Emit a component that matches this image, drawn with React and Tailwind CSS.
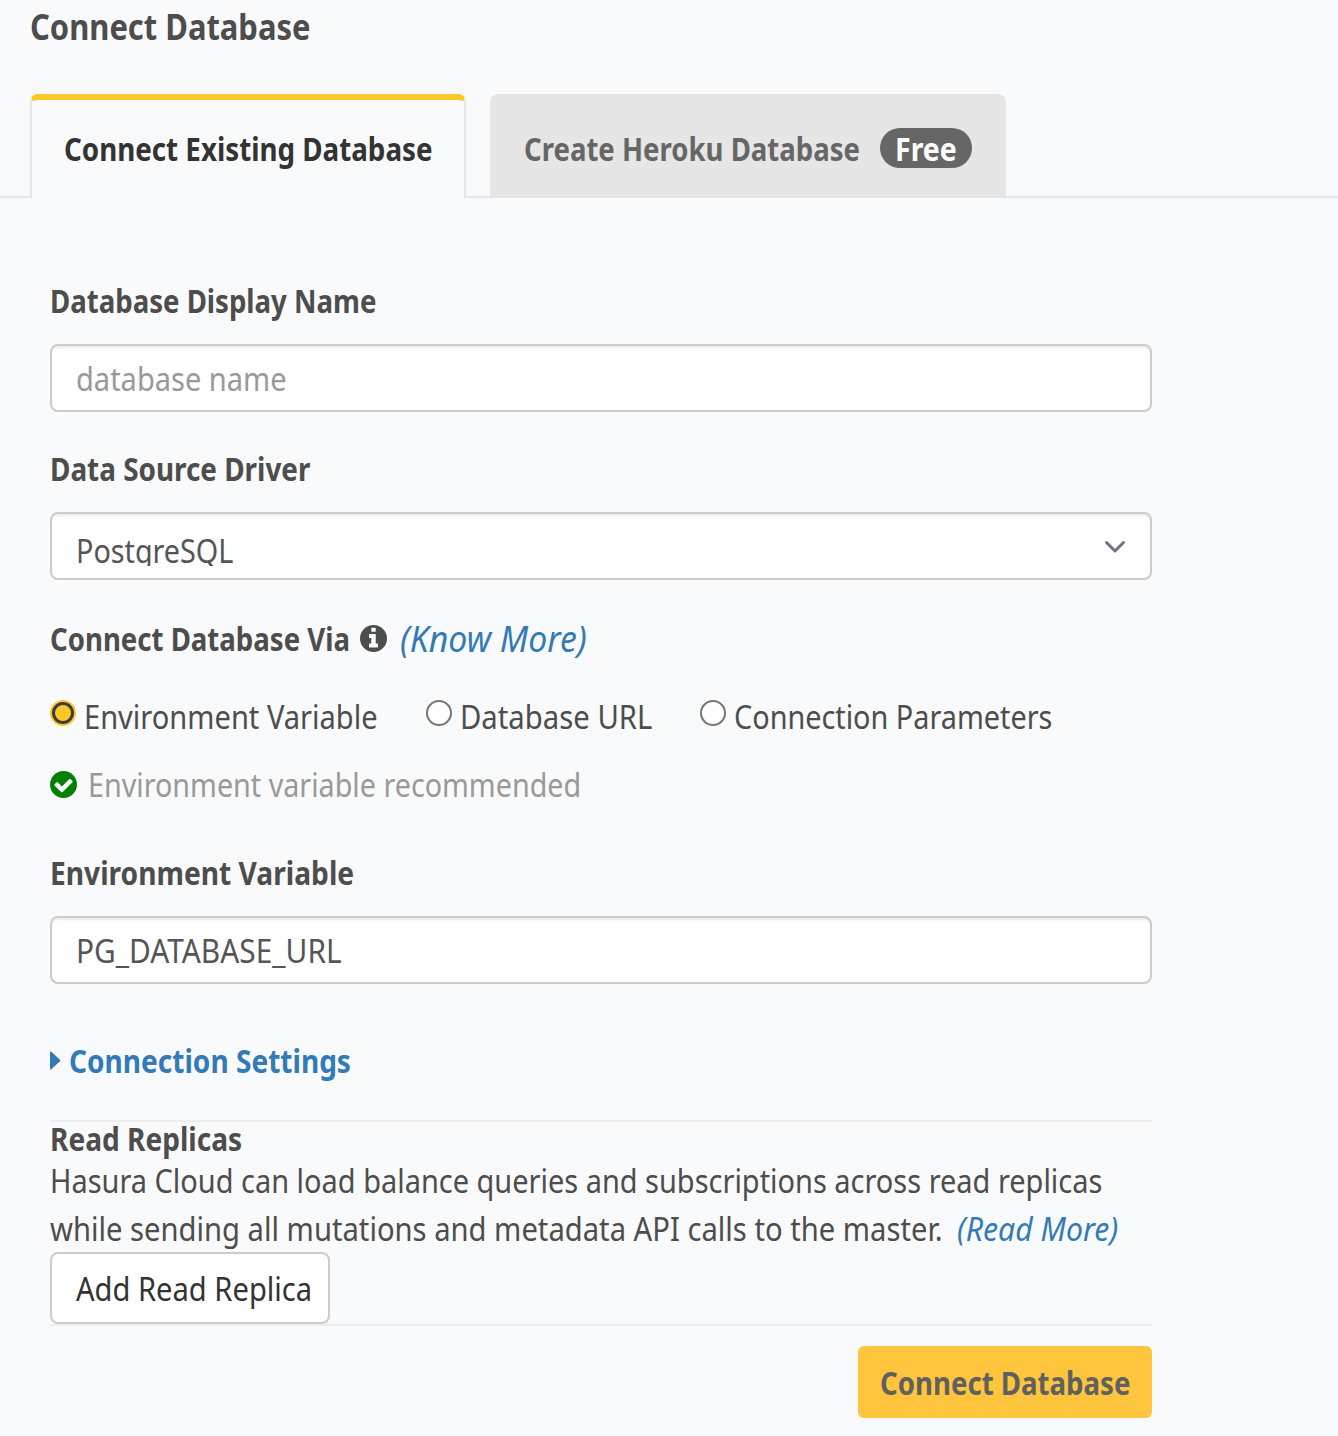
import React from "react";

/* Condensed text: the outer box reserves the drawn width, the inner one is narrowed to it. */
function Txt({ w, s, className = "", children }) {
  return (
    <span className={"inline-block shrink-0 " + w + " " + className}>
      <span className={"block w-max origin-left translate-y-px whitespace-pre " + s}>{children}</span>
    </span>
  );
}

function Field({ children, className = "" }) {
  return (
    <div className={"flex h-[68px] w-full justify-between rounded-[8px] border-2 border-[#ccc] bg-white pl-6 text-[#555] shadow-[inset_0_2px_2px_rgba(0,0,0,0.075)] " + className}>
      {children}
    </div>
  );
}

function Radio({ checked }) {
  return (
    <span className={"mt-2 flex size-[26px] shrink-0 items-center justify-center rounded-full " + (checked ? "bg-[#ffc627]" : "border-2 border-[#767676] bg-white")}>
      {checked && <span className="size-[22px] rounded-full border-[3px] border-[#3b3b3b]" />}
    </span>
  );
}

function InfoIcon() {
  return (
    <svg className="mr-3 mt-[11px] size-[27px] shrink-0" viewBox="128 128 1536 1536">
      <circle cx="896" cy="896" r="768" fill="currentColor" />
      <path fill="#f9fafc" d="M1152 1376v-160q0-14-9-23t-23-9h-96v-512q0-14-9-23t-23-9h-320q-14 0-23 9t-9 23v160q0 14 9 23t23 9h96v320h-96q-14 0-23 9t-9 23v160q0 14 9 23t23 9h448q14 0 23-9t9-23zM1024 480v-160q0-14-9-23t-23-9h-192q-14 0-23 9t-9 23v160q0 14 9 23t23 9h192q14 0 23-9t9-23z" />
    </svg>
  );
}

function CheckIcon() {
  return (
    <svg className="mt-[11px] size-[27px] shrink-0 text-[#008000]" viewBox="128 128 1536 1536">
      <circle cx="896" cy="896" r="768" fill="currentColor" />
      <path fill="#f9fafc" d="M1412 734q0-28-18-46l-91-90q-19-19-45-19t-45 19l-408 407-226-226q-19-19-45-19t-45 19l-91 90q-18 18-18 46 0 27 18 45l362 362q19 19 45 19 27 0 46-19l543-543q18-18 18-45z" />
    </svg>
  );
}

export default function App() {
  return (
    <div className="h-[1436px] w-[1338px] overflow-hidden bg-[#f9fafc] text-[32px] leading-[48px] text-[#4d4d4d] [font-family:'Noto_Sans',sans-serif]">
      <h1 className="flex h-[94px] pl-[30px] text-[36px] font-bold leading-[52px]">
        <Txt w="w-[284px]" s="scale-x-[0.859]">Connect Database</Txt>
      </h1>

      <div className="flex h-[104px] font-bold">
        <div className="w-[30px] border-b-2 border-[#e6e6e6]" />
        <div className="w-[436px] rounded-t-[8px] border-x-2 border-t-[6px] border-x-[#e6e6e6] border-t-[#ffc627] pl-8 pt-6 text-[#333]">
          <Txt w="w-[372px]" s="scale-x-[0.867]">Connect Existing Database</Txt>
        </div>
        <div className="w-6 border-b-2 border-[#e6e6e6]" />
        <div className="flex w-[516px] items-start rounded-t-[8px] bg-[#e6e6e6] pl-[34px] pt-[30px] text-[#666]">
          <Txt w="w-[356px]" s="scale-x-[0.861]">Create Heroku Database</Txt>
          <span className="mt-1 flex h-10 w-[92px] items-center rounded-full bg-[#666] pl-[15px] text-white">
            <Txt w="w-[64px]" s="scale-x-[0.89]">Free</Txt>
          </span>
        </div>
        <div className="flex-1 border-b-2 border-[#e6e6e6]" />
      </div>

      <form className="ml-[50px] flex w-[1102px] flex-col pt-[78px]">
        <label className="mb-5 flex font-bold">
          <Txt w="w-[329px]" s="scale-x-[0.862]">Database Display Name</Txt>
        </label>
        <Field className="items-center">
          <Txt w="w-[212px]" s="scale-x-[0.907]" className="text-[#999]">database name</Txt>
        </Field>

        <label className="mb-5 mt-8 flex font-bold">
          <Txt w="w-[264px]" s="scale-x-[0.871]">Data Source Driver</Txt>
        </label>
        <Field>
          <Txt w="w-[300px]" s="scale-x-[0.898]" className="mt-3 h-10 overflow-hidden">PostgreSQL</Txt>
          <svg className="mr-6 mt-[26px] h-3.5 w-[22px]" viewBox="0 0 22 14" fill="none" stroke="#6b7280" strokeWidth="3" strokeLinecap="round" strokeLinejoin="round">
            <path d="M2.5 2.5 11 11l8.500-8.500" />
          </svg>
        </Field>

        <div className="mt-[34px] flex h-12">
          <Txt w="w-[310px]" s="scale-x-[0.862]" className="font-bold">Connect Database Via</Txt>
          <InfoIcon />
          <Txt w="w-[190px]" s="translate-x-px scale-x-[0.938]" className="text-[36px] italic text-[#337ab7]">(Know More)</Txt>
        </div>

        <div className="mt-[30px] flex h-12">
          <Radio checked />
          <Txt w="w-[350px]" s="scale-x-[0.908]" className="pl-2">Environment Variable</Txt>
          <Radio />
          <Txt w="w-[248px]" s="scale-x-[0.915]" className="pl-2">Database URL</Txt>
          <Radio />
          <Txt w="w-[330px]" s="scale-x-[0.9]" className="pl-2">Connection Parameters</Txt>
        </div>

        <div className="mt-5 flex h-12 text-[#999]">
          <CheckIcon />
          <Txt w="w-[510px]" s="scale-x-[0.897]" className="pl-[11px]">Environment variable recommended</Txt>
        </div>

        <label className="mb-5 mt-10 flex font-bold">
          <Txt w="w-[310px]" s="scale-x-[0.88]">Environment Variable</Txt>
        </label>
        <Field className="items-center">
          <Txt w="w-[270px]" s="scale-x-[0.933]">PG_DATABASE_URL</Txt>
        </Field>

        <div className="mt-[52px] flex h-12 items-center font-bold text-[#337ab7]">
          <svg className="mr-[8px] h-[19px] w-[11px]" viewBox="0 0 11 19" fill="currentColor">
            <path d="M0 1.200Q0 0 1 .6L10 8.700Q10.800 9.500 10 10.300L1 18.400Q0 19 0 17.800Z" />
          </svg>
          <Txt w="w-[290px]" s="scale-x-[0.877]">Connection Settings</Txt>
        </div>

        <div className="mt-9 h-0.5 bg-[#eee]" />
        <div className="flex h-[34px] font-bold leading-8">
          <Txt w="w-[196px]" s="scale-x-[0.877]">Read Replicas</Txt>
        </div>
        <div className="flex">
          <Txt w="w-[1060px]" s="scale-x-[0.9045]">Hasura Cloud can load balance queries and subscriptions across read replicas</Txt>
        </div>
        <div className="flex">
          <Txt w="w-[907px]" s="scale-x-[0.912]">while sending all mutations and metadata API calls to the master.</Txt>
          <Txt w="w-[168px]" s="scale-x-[0.943]" className="italic text-[#337ab7]">(Read More)</Txt>
        </div>
        <button type="button" className="flex h-[72px] w-[280px] items-center rounded-[8px] border-2 border-[#ccc] bg-white pl-6 text-left text-[#333]">
          <Txt w="w-[238px]" s="scale-x-[0.91]">Add Read Replica</Txt>
        </button>
        <div className="h-0.5 bg-[#eee]" />

        <button type="button" className="mt-5 flex h-[72px] w-[294px] items-center self-end rounded-[6px] bg-[#ffc53d] pl-[22px] text-left font-bold text-[#606060]">
          <Txt w="w-[253px]" s="scale-x-[0.863]">Connect Database</Txt>
        </button>
      </form>
    </div>
  );
}
